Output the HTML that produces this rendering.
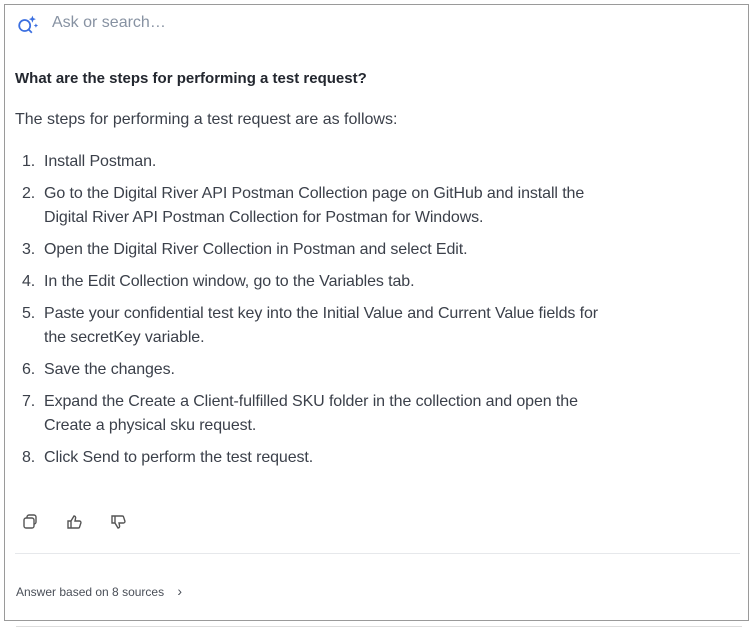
<!DOCTYPE html>
<html><head><meta charset="utf-8"><style>
html,body{margin:0;padding:0;background:#fff;width:756px;height:628px;overflow:hidden}
body{font-family:"Liberation Sans",sans-serif;color:#3b404a;position:relative}
.box{position:absolute;left:4px;top:4px;width:745px;height:617px;border:1px solid #9a9a9a;box-sizing:border-box}
.search{position:absolute;left:52px;top:14px;font-size:16px;color:#8792a2}
.q{position:absolute;left:15px;top:70px;font-size:15px;font-weight:bold;color:#23272f}
.p{position:absolute;left:15px;top:111px;font-size:16px}
ol{position:absolute;left:0;top:150px;margin:0;padding:0;list-style:none;font-size:16px;line-height:24px;letter-spacing:-0.1px}
li{position:relative;padding-left:44px;margin-bottom:8px;width:575px}
li span{position:absolute;left:22px}
.hr{position:absolute;left:15px;top:553px;width:725px;height:1px;background:#e6e8eb}
.src{position:absolute;left:16px;top:583px;font-size:12px;color:#4a4f58}
.bl{position:absolute;left:16px;top:626px;width:726px;height:1px;background:#ddd}
</style></head><body>
<div class="box"></div>
<svg style="position:absolute;left:17px;top:14px" width="22" height="22" viewBox="0 0 20 20" fill="none" stroke="#3b6fe0" stroke-width="1.6"><circle cx="7" cy="10.5" r="5"/><path d="M10.5 14l3 3"/><path d="M14 1.5l.9 2.3 2.3.9-2.3.9L14 7.9l-.9-2.3-2.3-.9 2.3-.9z" fill="#3b6fe0" stroke="none"/><path d="M17.2 8.5l.6 1.4 1.4.6-1.4.6-.6 1.4-.6-1.4-1.4-.6 1.4-.6z" fill="#3b6fe0" stroke="none"/></svg>
<div class="search">Ask or search…</div>
<div class="q">What are the steps for performing a test request?</div>
<div class="p">The steps for performing a test request are as follows:</div>
<ol>
<li><span>1.</span>Install Postman.</li>
<li><span>2.</span>Go to the Digital River API Postman Collection page on GitHub and install the Digital River API Postman Collection for Postman for Windows.</li>
<li><span>3.</span>Open the Digital River Collection in Postman and select Edit.</li>
<li><span>4.</span>In the Edit Collection window, go to the Variables tab.</li>
<li><span>5.</span>Paste your confidential test key into the Initial Value and Current Value fields for the secretKey variable.</li>
<li><span>6.</span>Save the changes.</li>
<li><span>7.</span>Expand the Create a Client-fulfilled SKU folder in the collection and open the Create a physical sku request.</li>
<li><span>8.</span>Click Send to perform the test request.</li>
</ol>
<svg style="position:absolute;left:22px;top:513px" width="18" height="18" viewBox="0 0 18 18" fill="none" stroke="#555" stroke-width="1.4"><rect x="2" y="5" width="10" height="10" rx="2"/><path d="M5 5V4a2 2 0 0 1 2-2h5a2 2 0 0 1 2 2v5a2 2 0 0 1-2 2"/></svg>
<svg style="position:absolute;left:66px;top:513px" width="18" height="18" viewBox="0 0 18 18" fill="none" stroke="#555" stroke-width="1.4"><path d="M2 8h3v7H2zM5 8l3-5c1 0 2 1 1.5 2.5L9 8h4.5a1.5 1.5 0 0 1 1.4 1.9l-1.3 4A1.5 1.5 0 0 1 12 15H5"/></svg>
<svg style="position:absolute;left:110px;top:513px" width="18" height="18" viewBox="0 0 18 18" fill="none" stroke="#555" stroke-width="1.4"><path d="M2 3h3v7H2zM5 10l3 5c1 0 2-1 1.5-2.5L9 10h4.5a1.5 1.5 0 0 0 1.4-1.9l-1.3-4A1.5 1.5 0 0 0 12 3H5"/></svg>
<div class="hr"></div>
<div class="src">Answer based on 8 sources <span style="margin-left:10px;font-size:14px">›</span></div>
<div class="bl"></div>
</body></html>
